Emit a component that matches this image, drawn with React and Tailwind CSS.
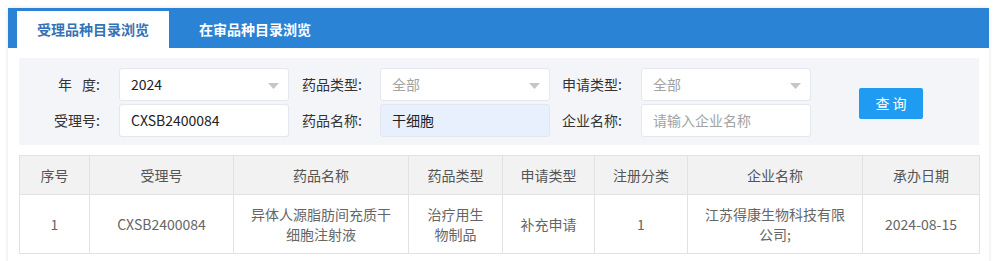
import React from 'react';

const Caret = () => (
  <svg className="absolute right-[9px] top-[14px]" width="11" height="6" viewBox="0 0 11 6">
    <path d="M0 0 L11 0 L5.5 6 Z" fill="#c3c6cc" />
  </svg>
);

const Field = ({ value, muted, select, fill }) => (
  <div
    className={`relative w-[170px] h-[33px] border border-[#e4e7ed] rounded-[3px] pl-[11px] flex items-center ${
      fill ? 'bg-[#e8f0fe]' : 'bg-white'
    } ${muted ? 'text-[#a3a3a3]' : 'text-[#222]'}`}
  >
    {value}
    {select && <Caret />}
  </div>
);

const Label = ({ children, w, pr }) => (
  <div className={`${w} ${pr} text-right text-[#333] shrink-0`}>{children}</div>
);

const columns = [
  { title: '序号', w: 'w-[70px]' },
  { title: '受理号', w: 'w-[144px]' },
  { title: '药品名称', w: 'w-[175px]' },
  { title: '药品类型', w: 'w-[94px]' },
  { title: '申请类型', w: 'w-[92px]' },
  { title: '注册分类', w: 'w-[93px]' },
  { title: '企业名称', w: 'w-[175px]' },
  { title: '承办日期', w: 'w-[117px]' },
];

const row = ['1', 'CXSB2400084', '异体人源脂肪间充质干细胞注射液', '治疗用生物制品', '补充申请', '1', '江苏得康生物科技有限公司;', '2024-08-15'];

export default function App() {
  return (
    <div className="w-[997px] h-[261px] overflow-hidden bg-white pt-2 pl-2 text-[14px] font-['Noto_Sans_CJK_SC',sans-serif]">
      <div className="w-[981px] h-[280px] bg-white shadow-[0_0_4px_rgba(0,0,0,0.12)]">
        {/* tabs */}
        <div className="h-[40px] bg-[#2b83d5] flex items-end pl-[9px] gap-[10px]">
          <div className="h-[37px] px-[20px] bg-white text-[#3471b6] font-bold flex items-center">受理品种目录浏览</div>
          <div className="h-[37px] px-[20px] text-white font-bold flex items-center">在审品种目录浏览</div>
        </div>

        {/* filters */}
        <div className="mx-[11px] mt-[10px] w-[960px] h-[87px] bg-[#f3f5f9] pt-[10px] flex items-start">
          <div className="flex flex-col gap-[3px]">
            <div className="flex items-center">
              <Label w="w-[100px]" pr="pr-[19px]"><span className="mr-[10px]">年</span>度:</Label>
              <Field value="2024" select />
              <Label w="w-[91px]" pr="pr-[18px]">药品类型:</Label>
              <Field value="全部" muted select />
              <Label w="w-[91px]" pr="pr-[19px]">申请类型:</Label>
              <Field value="全部" muted select />
            </div>
            <div className="flex items-center">
              <Label w="w-[100px]" pr="pr-[19px]">受理号:</Label>
              <Field value="CXSB2400084" />
              <Label w="w-[91px]" pr="pr-[18px]">药品名称:</Label>
              <Field value="干细胞" fill />
              <Label w="w-[91px]" pr="pr-[19px]">企业名称:</Label>
              <Field value="请输入企业名称" muted />
            </div>
          </div>
          <button className="ml-[48px] mt-[20px] w-[64px] h-[31px] bg-[#1f9cf1] rounded-[2px] text-white tracking-[3px] pl-[3px]">
            查询
          </button>
        </div>

        {/* table */}
        <table className="ml-[11px] mt-[10px] w-[960px] border-collapse table-fixed text-center">
          <thead>
            <tr className="h-[39px] bg-[#f2f2f2]">
              {columns.map((c) => (
                <th key={c.title} className={`${c.w} border border-[#e2e2e2] font-normal text-[#555] px-[15px]`}>
                  {c.title}
                </th>
              ))}
            </tr>
          </thead>
          <tbody>
            <tr className="h-[59px]">
              {row.map((v, i) => (
                <td key={i} className="border border-[#e2e2e2] text-[#666] leading-[20px] px-[15px]">
                  {v}
                </td>
              ))}
            </tr>
          </tbody>
        </table>
      </div>
    </div>
  );
}
